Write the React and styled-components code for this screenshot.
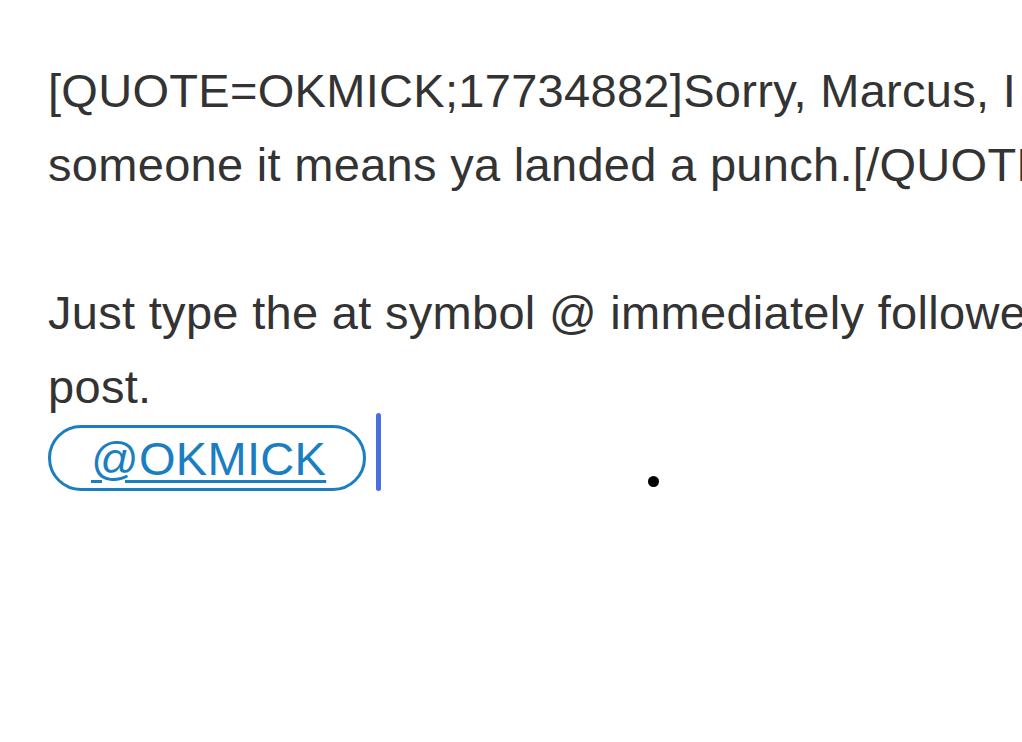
import React from 'react';
import styled, { createGlobalStyle } from 'styled-components';

const GlobalStyle = createGlobalStyle`
  html, body {
    margin: 0;
    padding: 0;
    background: #ffffff;
    overflow: hidden;
  }
`;

const Page = styled.div`
  position: relative;
  width: 1022px;
  height: 742px;
  overflow: hidden;
  background: #fff;
`;

const Editor = styled.div`
  padding: 54px 0 0 48px;
  font-family: "Liberation Sans", Arial, Helvetica, sans-serif;
  font-size: 47px;
  line-height: 74px;
  letter-spacing: 0.3px;
  color: #333333;
`;

const Line = styled.div`
  white-space: nowrap;
  height: ${p => (p.$blank ? '74px' : 'auto')};
`;

const MentionRow = styled.div`
  display: flex;
  align-items: flex-end;
  box-sizing: border-box;
  height: 74px;
  padding-bottom: 7px;
`;

const Mention = styled.span`
  display: inline-flex;
  align-items: center;
  box-sizing: border-box;
  height: 66px;
  padding: 0 37px 0 40px;
  border: 3px solid #1a7ec0;
  border-radius: 33px;
  color: #1a7ec0;
  line-height: 1;
  text-decoration: underline;
  text-decoration-thickness: 3px;
  text-underline-offset: 5px;
`;

const Caret = styled.span`
  display: inline-block;
  flex: none;
  width: 5px;
  height: 78px;
  margin-left: 10px;
  border-radius: 3px;
  background: #4a6ee0;
`;

const Dot = styled.span`
  position: absolute;
  left: 648px;
  top: 476px;
  width: 11px;
  height: 11px;
  border-radius: 50%;
  background: #000;
`;

export default function App() {
  return (
    <Page>
      <GlobalStyle />
      <Editor>
        <Line>[QUOTE=OKMICK;17734882]Sorry, Marcus, I didn't mean to hit a nerve. When you upset</Line>
        <Line>someone it means ya landed a punch.[/QUOTE]</Line>
        <Line $blank />
        <Line>Just type the at symbol @ immediately followed by the username in your</Line>
        <Line>post.</Line>
        <MentionRow>
          <Mention>@OKMICK</Mention>
          <Caret />
        </MentionRow>
      </Editor>
      <Dot />
    </Page>
  );
}
